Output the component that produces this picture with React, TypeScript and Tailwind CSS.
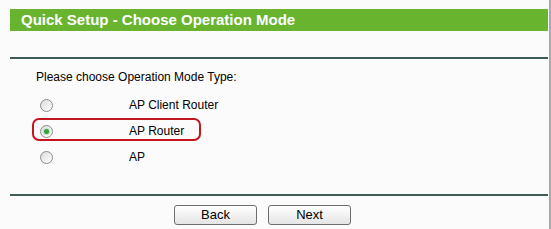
import React from "react";

function Radio({ checked }: { checked?: boolean }) {
  return (
    <span className="w-[13px] h-[13px] rounded-full border border-[#8c8c8c] bg-gradient-to-br from-[#dcdcdc] to-[#ffffff] flex items-center justify-center shrink-0">
      {checked && <span className="w-[5px] h-[5px] rounded-full bg-[#33a33a] shadow-[0_0_0_1px_#bfe3bf]" />}
    </span>
  );
}

export default function App() {
  const rows = [
    { label: "AP Client Router", checked: false, mark: false },
    { label: "AP Router", checked: true, mark: true },
    { label: "AP", checked: false, mark: false },
  ];
  return (
    <div className="w-[551px] h-[229px] bg-[#fbfbfb] flex font-['Liberation_Sans',Arial,sans-serif] text-black">
      <div className="w-[549px] pl-[10px] pt-[9px]">
        <div className="w-[538px] h-[22px] bg-[#68b42f] text-white font-bold text-[15px] leading-[22px] pl-[11px]">
          Quick Setup - Choose Operation Mode
        </div>
        <div className="h-[26px]" />
        <div className="w-[538px] h-[2px] bg-[#3d5c57]" />
        <div className="mt-[10px] pl-[26px] text-[12px] leading-[16px]">Please choose Operation Mode Type:</div>
        <div className="mt-[7px] flex flex-col">
          {rows.map((r) => (
            <div key={r.label} className="relative h-[26px] flex items-center pl-[30px] text-[12px]">
              <Radio checked={r.checked} />
              <span className="ml-[76px]">{r.label}</span>
              {r.mark && (
                <span className="absolute left-[22px] top-0 w-[169px] h-[23px] border-2 border-[#c3161f] rounded-[7px]" />
              )}
            </div>
          ))}
        </div>
        <div className="mt-[24px] w-[538px] h-[2px] bg-[#3d5c57]" />
        <div className="mt-[9px] pl-[164px] flex gap-[11px]">
          <button className="w-[83px] h-[20px] border border-[#6e6e6e] rounded-[3px] bg-gradient-to-b from-[#ffffff] to-[#e4e4e4] text-[13px] leading-[18px] text-black">
            Back
          </button>
          <button className="w-[83px] h-[20px] border border-[#6e6e6e] rounded-[3px] bg-gradient-to-b from-[#ffffff] to-[#e4e4e4] text-[13px] leading-[18px] text-black">
            Next
          </button>
        </div>
      </div>
      <div className="w-[2px] bg-[#a9a9a9]" />
    </div>
  );
}
